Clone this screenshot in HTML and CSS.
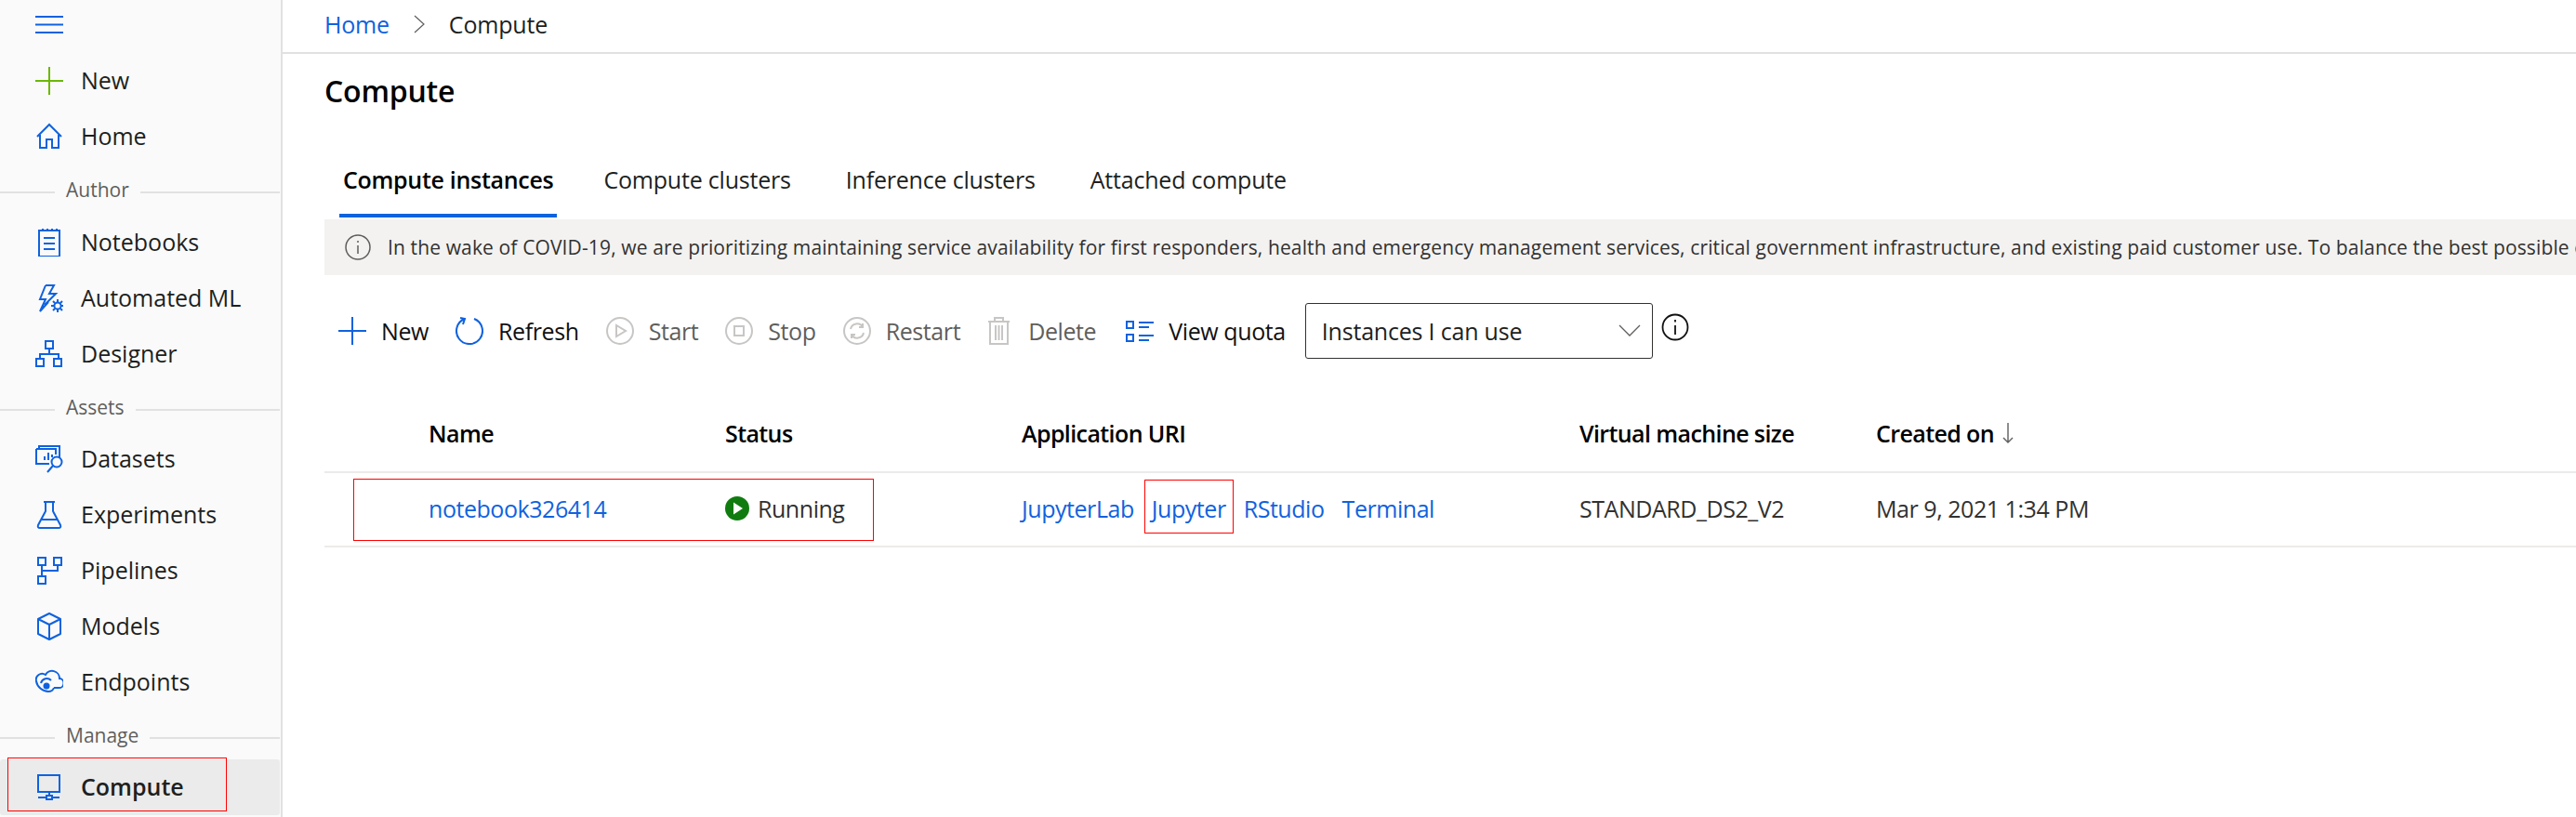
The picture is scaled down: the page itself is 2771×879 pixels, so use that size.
FILE: index.html
```html
<!DOCTYPE html>
<html lang="en">
<head>
<meta charset="utf-8">
<title>Compute</title>
<link rel="stylesheet" href="styles.css">
</head>
<body>
<div class="app">
  <nav class="side">
    <div class="burger"><svg class="ico" viewBox="0 0 30 30"><path d="M0 1h30M0 9.500h30M0 18h30" stroke="#0f62de" stroke-width="2" fill="none"/></svg></div>
    <a class="item"><svg class="ico" viewBox="0 0 30 30"><path d="M0 15h30M15 0v30" stroke="#6bb700" stroke-width="2" fill="none"/></svg><span>New</span></a>
    <a class="item"><svg class="ico" viewBox="0 0 30 30"><path d="M2 15 15 2l13 13M5 13v14h7v-9h6v9h7V13" stroke="#0f62de" stroke-width="2" fill="none"/></svg><span>Home</span></a>
    <div class="group first"><span>Author</span></div>
    <a class="item"><svg class="ico" viewBox="0 0 30 30"><path d="M4 2h22v28H4zM9 10h12M9 16h12M9 22h12M8 0v3M13 0v3M18 0v3M23 0v3" stroke="#0f62de" stroke-width="2" fill="none"/></svg><span>Notebooks</span></a>
    <a class="item"><svg class="ico" viewBox="0 0 30 30"><path d="M11 1h9l-5 9h7L10 22M11 1 5 16h6L5 29l9-10" stroke="#0f62de" stroke-width="2" fill="none"/><circle cx="24" cy="23" r="3.600" stroke="#0f62de" stroke-width="2" fill="none"/><path d="M24 16v3M24 27v3M17 23h3M28 23h2M19 18l2 2M27 26l2 2M19 28l2-2M27 20l2-2" stroke="#0f62de" stroke-width="2" fill="none"/></svg><span>Automated ML</span></a>
    <a class="item"><svg class="ico" viewBox="0 0 30 30"><path d="M11 1h8v8h-8zM1 20h8v8H1zM20 20h8v8h-8zM15 9v6M5 20v-5h20v5" stroke="#0f62de" stroke-width="2" fill="none"/></svg><span>Designer</span></a>
    <div class="group"><span>Assets</span></div>
    <a class="item"><svg class="ico" viewBox="0 0 30 30"><path d="M4 4V1h22v12M4 4h18v6M1 4h3M1 4v16h14M10 16v-4M14 16V8M18 13v-3" stroke="#0f62de" stroke-width="2" fill="none"/><circle cx="23" cy="18" r="5.500" stroke="#0f62de" stroke-width="2" fill="none"/><path d="m19 22-6 7" stroke="#0f62de" stroke-width="2" fill="none"/></svg><span>Datasets</span></a>
    <a class="item"><svg class="ico" viewBox="0 0 30 30"><path d="M9 1h12M11 1v10L3 26q-1 3 2 3h20q3 0 2-3l-8-15V1M7 20h16" stroke="#0f62de" stroke-width="2" fill="none"/></svg><span>Experiments</span></a>
    <a class="item"><svg class="ico" viewBox="0 0 30 30"><path d="M3 1h8v8H3zM20 1h8v8h-8zM3 21h8v8H3zM7 9v12M7 15h17V9" stroke="#0f62de" stroke-width="2" fill="none"/></svg><span>Pipelines</span></a>
    <a class="item"><svg class="ico" viewBox="0 0 30 30"><path d="M15 1 27 7v16l-12 6-12-6V7zM3 7l12 6 12-6M15 13v16" stroke="#0f62de" stroke-width="2" fill="none" stroke-linejoin="round"/></svg><span>Models</span></a>
    <a class="item"><svg class="ico" viewBox="0 0 30 30"><path d="M20 21h5a5 5 0 0 0 1-10 8 8 0 0 0-15-4 6.500 6.500 0 0 0-10 7c1 6 7 11 13 11 3 0 5-1 6-4" stroke="#0f62de" stroke-width="2" fill="none"/><path d="M6 16a6.500 6.500 0 0 1 11-3" stroke="#0f62de" stroke-width="2" fill="none"/><circle cx="12" cy="19" r="3.500" fill="#0f62de"/></svg><span>Endpoints</span></a>
    <div class="group"><span>Manage</span></div>
    <a class="item active"><svg class="ico" viewBox="0 0 30 30"><path d="M3 2h23v18H3zM3 26h9M18 26h8M12 28v-4h6v4h-6zM15 20v4" stroke="#0f62de" stroke-width="2" fill="none"/></svg><span>Compute</span><i class="mark mark-nav"></i></a>
  </nav>

  <main class="main">
    <div class="crumbs">
      <a class="link">Home</a>
      <svg class="chev" viewBox="0 0 12 20"><path d="m1 1 10 9-10 9" stroke="#605e5c" stroke-width="1.200" fill="none"/></svg>
      <span>Compute</span>
    </div>
    <div class="content">
      <h1 class="title">Compute</h1>
      <div class="tabs">
        <a class="tab on">Compute instances</a>
        <a class="tab">Compute clusters</a>
        <a class="tab">Inference clusters</a>
        <a class="tab">Attached compute</a>
      </div>
      <div class="banner">
        <svg class="bico" viewBox="0 0 28 28"><circle cx="14" cy="14" r="13" stroke="#605e5c" stroke-width="1.500" fill="none"/><path d="M14 12v9M14 7v2" stroke="#605e5c" stroke-width="1.500" fill="none"/></svg>
        <span>In the wake of COVID-19, we are prioritizing maintaining service availability for first responders, health and emergency management services, critical government infrastructure, and existing paid customer use. To balance the best possible experience for all customers, we may limit new resources in some regions.</span>
      </div>
      <div class="toolbar">
        <a class="btn"><svg class="tico" viewBox="0 0 30 30"><path d="M0 15h30M15 0v30" stroke="#0f62de" stroke-width="2" fill="none"/></svg>New</a>
        <a class="btn"><svg class="tico" viewBox="0 0 30 30"><path d="M10 2a14 14 0 1 0 10 0M5 1l5 1-2 6" stroke="#0f62de" stroke-width="2" fill="none"/></svg>Refresh</a>
        <a class="btn off"><svg class="tico" viewBox="0 0 30 30"><circle cx="15" cy="15" r="14" stroke="#c8c6c4" stroke-width="2" fill="none"/><path d="M11 9v12l10-6z" stroke="#c8c6c4" stroke-width="2" fill="none"/></svg>Start</a>
        <a class="btn off"><svg class="tico" viewBox="0 0 30 30"><circle cx="15" cy="15" r="14" stroke="#c8c6c4" stroke-width="2" fill="none"/><path d="M10 10h10v10H10z" stroke="#c8c6c4" stroke-width="2" fill="none"/></svg>Stop</a>
        <a class="btn off"><svg class="tico" viewBox="0 0 30 30"><circle cx="15" cy="15" r="14" stroke="#c8c6c4" stroke-width="2" fill="none"/><path d="M8 13a7 7 0 0 1 13-2M22 17a7 7 0 0 1-13 2M21 7v4h-4M9 23v-4h4" stroke="#c8c6c4" stroke-width="2" fill="none"/></svg>Restart</a>
        <a class="btn off wide"><svg class="tico del" viewBox="0 0 25 30"><path d="M1 5h23M8 5V1h9v4M3 5v24h19V5M9 9v16M12.500 9v16M16 9v16" stroke="#c8c6c4" stroke-width="2" fill="none"/></svg>Delete</a>
        <a class="btn"><svg class="tico" viewBox="0 0 30 30"><path d="M1 5h7v7H1zM1 19h7v7H1z" stroke="#0f62de" stroke-width="2" fill="none"/><path d="M14 6h16M14 11h11M14 20h16M14 25h11" stroke="#0f62de" stroke-width="2" fill="none"/></svg>View quota</a>
        <div class="select"><span>Instances I can use</span><svg class="sarrow" viewBox="0 0 24 14"><path d="m1 1 11 11L23 1" stroke="#605e5c" stroke-width="1.300" fill="none"/></svg></div>
        <svg class="qinfo" viewBox="0 0 30 30"><circle cx="15" cy="15" r="13.500" stroke="#111" stroke-width="1.800" fill="none"/><path d="M15 13v10M15 7v2.500" stroke="#111" stroke-width="1.800" fill="none"/></svg>
      </div>
      <div class="thead">
        <div></div>
        <div>Name</div>
        <div>Status</div>
        <div>Application URI</div>
        <div>Virtual machine size</div>
        <div class="sorted">Created on <svg class="sort" viewBox="0 0 14 24"><path d="M7 1v21M2 17l5 5 5-5" stroke="#605e5c" stroke-width="1.400" fill="none"/></svg></div>
      </div>
      <div class="trow">
        <div></div>
        <div><a class="link">notebook326414</a></div>
        <div class="status"><svg class="run" viewBox="0 0 26 26"><circle cx="13" cy="13" r="13" fill="#107c10"/><path d="M9 6.500v13l10-6.500z" fill="#fff"/></svg>Running</div>
        <div class="apps"><a class="link">JupyterLab</a><a class="link">Jupyter</a><a class="link">RStudio</a><a class="link">Terminal</a></div>
        <div>STANDARD_DS2_V2</div>
        <div>Mar 9, 2021 1:34 PM</div>
        <i class="mark mark-name"></i>
        <i class="mark mark-jup"></i>
      </div>
    </div>
  </main>
</div>
</body>
</html>
```
FILE: styles.css
```css
* { box-sizing: border-box; }
html, body { margin: 0; padding: 0; height: 879px; overflow: hidden; background: #fff; }
body { font-family: "Open Sans", "Noto Sans", sans-serif; color: #201f1e; }
a { text-decoration: none; color: inherit; }
.app { display: flex; height: 879px; }
.side { flex: 0 0 304px; background: #fafafa; border-right: 2px solid #e1e1e1; height: 879px; padding-right: 1px; }
.ico { width: 30px; height: 30px; flex: none; }
.burger { height: 57px; padding: 17px 0 0 38px; }
.item { position: relative; display: flex; align-items: center; gap: 19px; height: 60px; padding-left: 38px; font-size: 25px; color: #201f1e; }
.item span { position: relative; top: -1px; }
.item.active { background: #ebebeb; border-radius: 3px; font-weight: 600; }
.group { height: 53px; padding-top: 8px; position: relative; font-size: 21px; color: #605e5c; line-height: 38px; padding-left: 59px; display: flex; }
.group.first { height: 54px; }
.group::before { content: ""; position: absolute; left: 0; right: 0; top: 29px; border-top: 2px solid #e1e1e1; }
.group span { position: relative; background: #fafafa; padding: 0 12px; height: 38px; }
.mark { position: absolute; border: 1px solid #f00; display: block; }
.mark-nav { left: 8px; top: -2px; width: 236px; height: 58px; }
.main { flex: 1; min-width: 0; }
.crumbs { height: 58px; border-bottom: 2px solid #e1e1e1; display: flex; align-items: center; padding-left: 45px; padding-bottom: 4px; font-size: 25px; letter-spacing: -0.2px; }
.link { color: #0f62de; }
.chev { width: 12px; height: 20px; margin: 0 26px 0 26px; }
.content { padding-left: 45px; }
.title { margin: 0; height: 84px; font-size: 32px; font-weight: 600; line-height: 80px; letter-spacing: -0.2px; color: #000; }
.tabs { display: flex; height: 92px; padding-left: 20px; }
.tab { position: relative; font-size: 25px; letter-spacing: -0.2px; line-height: 102px; margin-right: 59px; }
.tab.on { font-weight: 600; color: #000; letter-spacing: -0.3px; margin-right: 54px; }
.tab.on::after { content: ""; position: absolute; left: -4px; right: -4px; bottom: 0; height: 4px; background: #0f62de; }
.banner { margin-top: 2px; height: 60px; background: #f3f2f1; display: flex; align-items: center; padding-left: 22px; gap: 18px; white-space: nowrap; overflow: hidden; font-size: 21px; letter-spacing: 0.13px; color: #323130; }
.bico { width: 28px; height: 28px; flex: none; }
.toolbar { height: 120px; display: flex; align-items: center; padding-left: 15px; font-size: 25px; letter-spacing: -0.4px; }
.btn { display: flex; align-items: center; gap: 16px; margin-right: 29px; color: #111; }
.btn.off { color: #605e5c; }
.btn.wide { gap: 19px; margin-right: 32px; }
.tico { width: 30px; height: 30px; flex: none; }
.tico.del { width: 25px; }
.select { width: 374px; height: 60px; border: 1px solid #323130; border-radius: 3px; display: flex; align-items: center; justify-content: space-between; padding: 0 12px 0 17px; margin-left: -8px; letter-spacing: -0.2px; }
.sarrow { width: 24px; height: 14px; }
.qinfo { width: 30px; height: 30px; margin: -8px 0 0 9px; }
.thead, .trow { position: relative; display: grid; grid-template-columns: 112px 319px 319px 600px 319px 1fr; align-items: center; font-size: 25px; letter-spacing: -0.45px; }
.thead { height: 93px; padding-top: 8px; border-bottom: 2px solid #edebe9; font-weight: 600; color: #000; letter-spacing: -0.6px; }
.trow { height: 80px; padding-bottom: 2px; border-bottom: 2px solid #edebe9; color: #323130; }
.sorted { display: flex; align-items: center; gap: 8px; }
.sort { width: 14px; height: 24px; }
.status { display: flex; align-items: center; gap: 9px; }
.run { width: 26px; height: 26px; }
.apps { display: flex; gap: 19px; }
.mark-name { left: 31px; top: 6px; width: 560px; height: 67px; }
.mark-jup { left: 882px; top: 7px; width: 96px; height: 58px; }
```
